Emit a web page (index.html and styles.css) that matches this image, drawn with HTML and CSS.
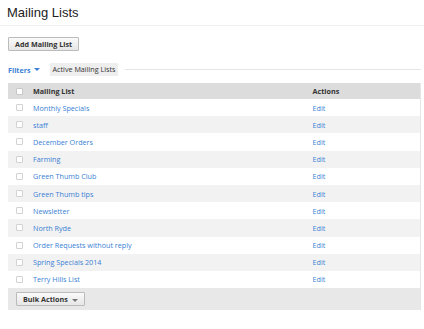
FILE: index.html
```html
<!DOCTYPE html>
<html lang="en">
<head>
  <meta charset="UTF-8">
  <meta name="viewport" content="width=device-width, initial-scale=1.0">
  <title>Mailing Lists</title>
  <link rel="stylesheet" href="styles.css">
</head>
<body>
<div class="page-head">
  <h1>Mailing Lists</h1>
</div>
<div class="content">
  <div class="toolbar">
    <button class="button">Add Mailing List</button>
  </div>
  <div class="filter-row">
    <a href="#" class="filters">Filters <span class="caret"></span></a>
    <span class="filter-tag">Active Mailing Lists</span>
    <div class="filter-line"></div>
  </div>
  <table class="list-table">
    <colgroup>
      <col class="col-check">
      <col>
      <col class="col-actions">
    </colgroup>
    <thead>
      <tr>
        <th><span class="checkbox head"></span></th>
        <th>Mailing List</th>
        <th>Actions</th>
      </tr>
    </thead>
    <tbody>
      <tr><td><span class="checkbox"></span></td><td><a href="#">Monthly Specials</a></td><td><a href="#">Edit</a></td></tr>
      <tr><td><span class="checkbox"></span></td><td><a href="#">staff</a></td><td><a href="#">Edit</a></td></tr>
      <tr><td><span class="checkbox"></span></td><td><a href="#">December Orders</a></td><td><a href="#">Edit</a></td></tr>
      <tr><td><span class="checkbox"></span></td><td><a href="#">Farming</a></td><td><a href="#">Edit</a></td></tr>
      <tr><td><span class="checkbox"></span></td><td><a href="#">Green Thumb Club</a></td><td><a href="#">Edit</a></td></tr>
      <tr><td><span class="checkbox"></span></td><td><a href="#">Green Thumb tips</a></td><td><a href="#">Edit</a></td></tr>
      <tr><td><span class="checkbox"></span></td><td><a href="#">Newsletter</a></td><td><a href="#">Edit</a></td></tr>
      <tr><td><span class="checkbox"></span></td><td><a href="#">North Ryde</a></td><td><a href="#">Edit</a></td></tr>
      <tr><td><span class="checkbox"></span></td><td><a href="#">Order Requests without reply</a></td><td><a href="#">Edit</a></td></tr>
      <tr><td><span class="checkbox"></span></td><td><a href="#">Spring Specials 2014</a></td><td><a href="#">Edit</a></td></tr>
      <tr><td><span class="checkbox"></span></td><td><a href="#">Terry Hills List</a></td><td><a href="#">Edit</a></td></tr>
    </tbody>
    <tfoot>
      <tr>
        <td colspan="3"><button class="button">Bulk Actions <span class="caret grey"></span></button></td>
      </tr>
    </tfoot>
  </table>
</div>
</body>
</html>
```

FILE: styles.css
```css
body {
  font-family: "Open Sans", Arial, sans-serif;
  font-size: 7.2px;
  color: #333;
  margin: 0;
  padding: 0;
  background-color: #fff;
}
a {
  color: #3a7fd5;
  text-decoration: none;
}
.page-head {
  padding: 5px 0 4px 7px;
  border-bottom: 1px solid #eee;
}
h1 {
  margin: 0;
  font-family: "Liberation Sans", Arial, sans-serif;
  font-size: 13px;
  line-height: 16px;
  font-weight: normal;
  color: #222;
}
.content {
  padding: 0 3px 0 8px;
}
.toolbar {
  margin-top: 11px;
}
.button {
  font-family: "Open Sans", Arial, sans-serif;
  font-size: 7.2px;
  font-weight: bold;
  color: #333;
  height: 14px;
  padding: 0 6px;
  line-height: 12px;
  border: 1px solid #bbb;
  border-radius: 1px;
  background: linear-gradient(#fafafa, #e6e6e6);
  cursor: pointer;
}
.filter-row {
  display: flex;
  align-items: center;
  margin-top: 12px;
  height: 13px;
}
.filters {
  font-weight: bold;
  display: flex;
  align-items: center;
  gap: 3px;
}
.caret {
  display: inline-block;
  width: 0;
  height: 0;
  border-left: 3px solid transparent;
  border-right: 3px solid transparent;
  border-top: 3px solid #3a7fd5;
}
.caret.grey {
  border-top-color: #777;
  margin-left: 2px;
  vertical-align: middle;
}
.filter-tag {
  background-color: #eee;
  height: 13px;
  line-height: 13px;
  padding: 0 3px;
  margin-left: 10px;
}
.filter-line {
  flex: 1;
  height: 1px;
  background-color: #e4e4e4;
  margin-left: 7px;
}
.list-table {
  margin-top: 7px;
  width: 413px;
  border-collapse: collapse;
  table-layout: fixed;
  border-right: 1px solid #e6e6e6;
}
.col-check {
  width: 25px;
}
.col-actions {
  width: 108px;
}
.list-table th {
  background-color: #dcdcdc;
  text-align: left;
  font-weight: bold;
  height: 16px;
  padding: 0;
}
.list-table td {
  height: 17.2px;
  padding: 0;
}
.list-table th:first-child,
.list-table td:first-child {
  padding-left: 8px;
}
.list-table tbody tr:nth-child(even) {
  background-color: #f2f2f2;
}
.checkbox {
  display: block;
  width: 5px;
  height: 5px;
  border: 1px solid #d2d2d2;
  border-radius: 1px;
  background-color: #fff;
}
.checkbox.head {
  border-color: #c8c8c8;
}
.list-table tfoot td {
  background-color: #e8e8e8;
  height: 22px;
  padding-left: 7px;
}
```
